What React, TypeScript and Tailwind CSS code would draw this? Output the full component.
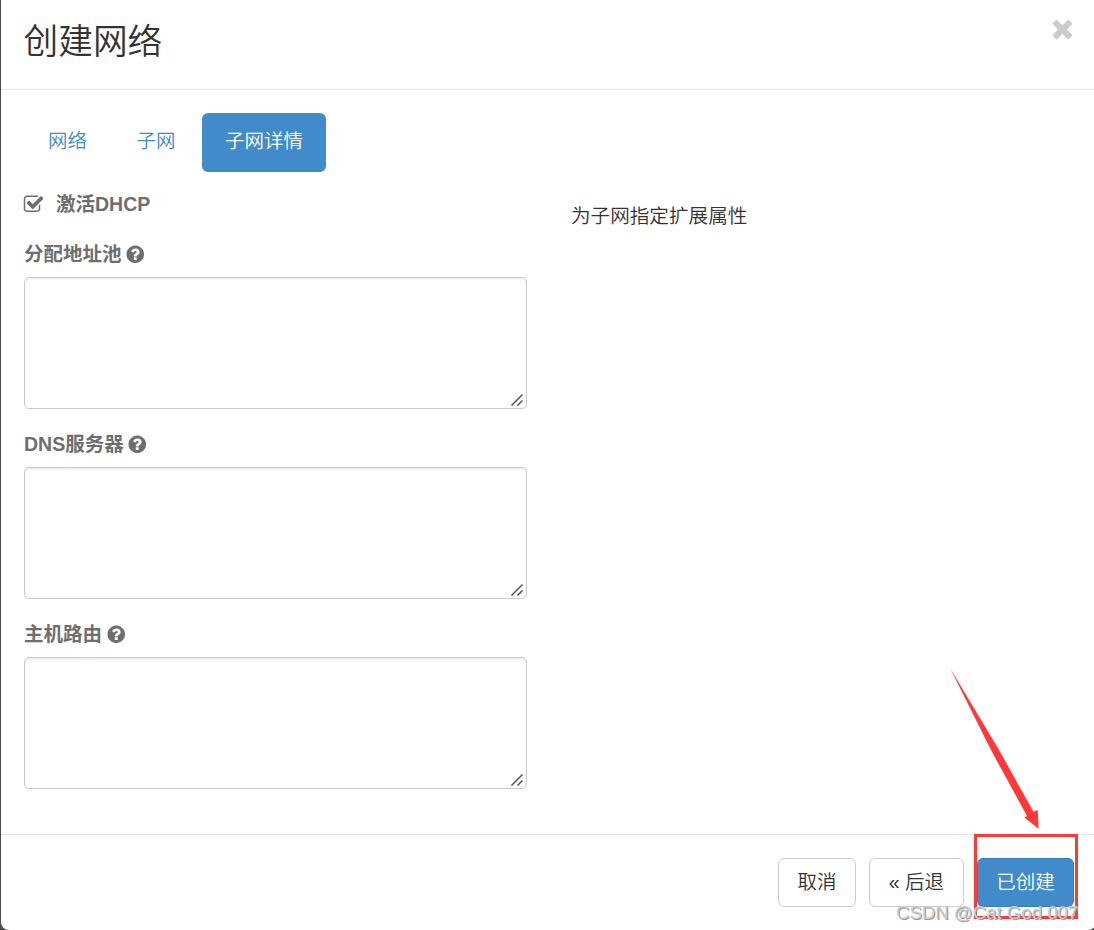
import React from "react";
import clsx from "clsx";

const TABS = ["网络", "子网", "子网详情"];

const FIELDS = [
  { id: "allocation_pools", label: "分配地址池" },
  { id: "dns_nameservers", label: "DNS服务器" },
  { id: "host_routes", label: "主机路由" },
];

type IconProps = { d: string; className?: string };

const Icon = ({ d, className }: IconProps) => (
  <svg viewBox="0 0 1792 1792" fill="currentColor" className={className} aria-hidden="true">
    <path d={d} />
  </svg>
);

const TIMES =
  "M1490 1322q0 40-28 68l-136 136q-28 28-68 28t-68-28l-294-294-294 294q-28 28-68 28t-68-28l-136-136q-28-28-28-68t28-68l294-294-294-294q-28-28-28-68t28-68l136-136q28-28 68-28t68 28l294 294 294-294q28-28 68-28t68 28l136 136q28 28 28 68t-28 68l-294 294 294 294q28 28 28 68z";
const QUESTION =
  "M1024 1376v-192q0-14-9-23t-23-9h-192q-14 0-23 9t-9 23v192q0 14 9 23t23 9h192q14 0 23-9t9-23zm256-672q0-88-55.5-163t-138.5-116-170-41q-243 0-371 213-15 24 8 42l132 100q7 6 19 6 16 0 25-12 53-68 86-92 34-24 86-24 48 0 85.5 26t37.5 59q0 38-20 61t-68 45q-63 28-115.5 86.5t-52.5 125.5v36q0 14 9 23t23 9h192q14 0 23-9t9-23q0-19 21.5-49.5t54.5-49.5q32-18 49-28.5t46-35 44.5-48 28-60.5 12.5-81zm384 192q0 209-103 385.5t-279.5 279.5-385.5 103-385.5-103-279.5-279.5-103-385.5 103-385.5 279.5-279.5 385.5-103 385.5 103 279.5 279.5 103 385.5z";
const CHECK =
  "M1472 930v318q0 119-84.5 203.5t-203.5 84.5h-832q-119 0-203.5-84.5t-84.5-203.5v-832q0-119 84.5-203.5t203.5-84.5h832q63 0 117 25 15 7 18 23 3 17-9 29l-49 49q-10 10-23 10-3 0-9-2-23-6-45-6h-832q-66 0-113 47t-47 113v832q0 66 47 113t113 47h832q66 0 113-47t47-113v-254q0-13 9-22l64-64q10-10 23-10 6 0 12 3 20 8 20 29zm231-489l-814 814q-24 24-57 24t-57-24l-430-430q-24-24-24-57t24-57l110-110q24-24 57-24t57 24l263 263 647-647q24-24 57-24t57 24l110 110q24 24 24 57t-24 57z";

const Field = ({ id, label }: { id: string; label: string }) => (
  <div className="h-[190px]">
    <label htmlFor={id} className="flex h-7 items-center gap-[3.5px] font-bold text-[#6e6e6e]">
      <span className="pt-[2px]">{label}</span>
      <Icon d={QUESTION} className="size-[20.5px]" />
    </label>
    <div className="relative mt-[9px] h-[132px] w-[503px]">
      <textarea
        id={id}
        className="block size-full resize-none rounded-[5px] border border-[#ccc] bg-white px-4 py-2 shadow-[inset_0_1px_2px_rgba(0,0,0,0.1)] outline-none"
      />
      {/* resize grip */}
      <svg viewBox="0 0 14 14" className="absolute right-[3px] bottom-[2px] size-[14px]" stroke="#555" strokeWidth="1.5">
        <path d="M1.5 12.5l11-11M7.5 12.5l5-5" />
      </svg>
    </div>
  </div>
);

export default function App() {
  return (
    <div className="h-[930px] w-[1094px] overflow-hidden bg-[#4d4d4d] pl-px font-['Liberation_Sans','Noto_Sans_CJK_SC',sans-serif] text-[19.5px] font-[350] text-[#333]">
      <div className="relative flex h-[930px] w-[1095px] flex-col rounded-b-[8px] bg-white">
        <header className="flex h-[90px] shrink-0 items-start justify-between border-b border-[#e5e5e5] pr-[19px] pl-[22.5px]">
          <h3 className="mt-[17px] text-[34.7px] leading-[50px]">创建网络</h3>
          <button aria-label="Close" className="mt-[14px] text-[#ccc]">
            <Icon d={TIMES} className="size-[29px]" />
          </button>
        </header>

        <section className="h-[744px] shrink-0 px-[23px] pt-[23px]">
          <ul className="flex h-[59px] gap-[3.5px] pl-px">
            {TABS.map((tab, i) => (
              <li
                key={tab}
                className={clsx(
                  "flex items-center rounded-[6px] px-[23px] pb-[2px]",
                  i === 2 ? "bg-[#428bca] text-white" : "text-[#428bca]"
                )}
              >
                {tab}
              </li>
            ))}
          </ul>

          <div className="flex">
            <div className="w-[547px] pt-[18px]">
              <div className="flex h-7 items-center gap-3 font-bold text-[#6e6e6e]">
                <Icon d={CHECK} className="-ml-px size-[21px]" />
                <span className="pt-[2px]">激活DHCP</span>
              </div>
              <div className="mt-[22px]">
                {FIELDS.map((f) => (
                  <Field key={f.id} {...f} />
                ))}
              </div>
            </div>
            <p className="pt-[30px] text-[19.6px] leading-7">为子网指定扩展属性</p>
          </div>
        </section>

        <footer className="flex h-[96px] shrink-0 justify-end gap-[13px] border-t border-[#e5e5e5] pt-[23px] pr-[22px]">
          <button className="h-[49px] w-[78px] rounded-[6px] border border-[#ccc] bg-white">取消</button>
          <button className="h-[49px] w-[95px] rounded-[6px] border border-[#ccc] bg-white">« 后退</button>
          <button className="h-[49px] w-[97px] rounded-[6px] border border-[#357ebd] bg-[#428bca] text-white">
            已创建
          </button>
        </footer>

        {/* annotations */}
        <div className="absolute top-[834px] left-[973px] h-[85px] w-[104px] border-[3px] border-[#ff3838]" />
        <svg viewBox="0 0 90 162" className="absolute top-[668px] left-[949px] h-[162px] w-[90px]" fill="#ff3838">
          <path d="M0 0L49 82 83.5 143.7l4.2-1.7 1 18.8-14.4-11.3 2.7-1.5L41 82z" />
        </svg>
        <span className="absolute top-[901px] left-[895px] text-[18.6px] leading-6 whitespace-nowrap text-[#ccc] [text-shadow:1px_1px_0_#999]">
          CSDN @Cat God 007
        </span>
      </div>
    </div>
  );
}
